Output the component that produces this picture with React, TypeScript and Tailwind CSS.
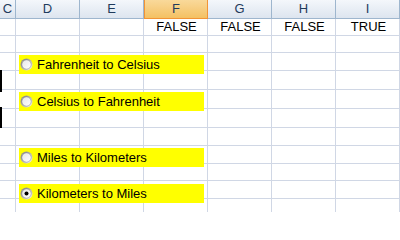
import React from "react";

const cols = [
  { name: "C", w: "w-4" },
  { name: "D", w: "w-16" },
  { name: "E", w: "w-16" },
  { name: "F", w: "w-16" },
  { name: "G", w: "w-16" },
  { name: "H", w: "w-16" },
  { name: "I", w: "w-16" },
];

// row heights as in the sheet (rows are not all the same)
const rowHeights = [
  "h-[17px]", "h-[17px]", "h-[18px]", "h-[19px]", "h-[19px]", "h-[19px]",
  "h-[18px]", "h-[18px]", "h-[17px]", "h-[18px]", "h-[14px]",
];

const firstRow: Record<string, string> = { F: "FALSE", G: "FALSE", H: "FALSE", I: "TRUE" };

const options = [
  { label: "Fahrenheit to Celsius", top: "top-[55px]", checked: false },
  { label: "Celsius to Fahrenheit", top: "top-[92px]", checked: false },
  { label: "Miles to Kilometers", top: "top-[148px]", checked: false },
  { label: "Kilometers to Miles", top: "top-[184px]", checked: true },
];

function Radio({ checked }: { checked: boolean }) {
  return (
    <svg width="13" height="13" viewBox="0 0 13 13" className="shrink-0">
      <defs>
        <linearGradient id="rim" x1="0" y1="0" x2="1" y2="1">
          <stop offset="0" stopColor="#808080" />
          <stop offset="0.55" stopColor="#b8b8b8" />
          <stop offset="1" stopColor="#ffffff" />
        </linearGradient>
        <linearGradient id="fill" x1="0" y1="0" x2="1" y2="1">
          <stop offset="0" stopColor="#e6e6e6" />
          <stop offset="1" stopColor="#ffffff" />
        </linearGradient>
      </defs>
      <circle cx="6.5" cy="6.5" r="6" fill="url(#rim)" />
      <circle cx="6.5" cy="6.5" r="4.6" fill="url(#fill)" stroke="#5a5a5a" strokeWidth="0.6" strokeOpacity="0.5" />
      {checked && <circle cx="6.5" cy="6.5" r="2" fill="#000" />}
    </svg>
  );
}

export default function App() {
  return (
    <div className="relative w-[400px] h-[212px] overflow-hidden bg-white text-[13px] font-['Liberation_Sans',Arial,sans-serif]">
      {/* column headers */}
      <div className="flex h-[19px]">
        {cols.map((c) =>
          c.name === "F" ? (
            <div
              key={c.name}
              className={`${c.w} flex items-center justify-center border-x border-b border-[#f29436] bg-gradient-to-b from-[#f9d99a] to-[#f4c163] text-[#1f3b5c]`}
            >
              {c.name}
            </div>
          ) : (
            <div
              key={c.name}
              className={`${c.w} flex items-center justify-center border-r border-b border-[#9eb6ce] bg-gradient-to-b from-[#f4f7fb] to-[#dde5ef] text-[#1f3b5c]`}
            >
              {c.name}
            </div>
          )
        )}
      </div>

      {/* cells */}
      {rowHeights.map((h, r) => (
        <div key={r} className={`flex ${h}`}>
          {cols.map((c) => (
            <div
              key={c.name}
              className={`${c.w} flex items-end justify-center pb-px pl-0.5 border-r border-b border-[#d0d7e5] text-black leading-[15px]`}
            >
              {r === 0 ? firstRow[c.name] ?? "" : ""}
            </div>
          ))}
        </div>
      ))}

      {/* edges of controls cut off at the left */}
      <div className="absolute left-0 top-[70px] w-0.5 h-[22px] bg-black" />
      <div className="absolute left-0 top-[107px] w-0.5 h-[21px] bg-black" />

      {/* option buttons floating over the sheet */}
      {options.map((o) => (
        <div
          key={o.label}
          className={`absolute ${o.top} left-[19px] w-[185px] h-[19px] bg-[#ffff00] flex items-center gap-1 pl-px text-black`}
        >
          <Radio checked={o.checked} />
          <span className="leading-none">{o.label}</span>
        </div>
      ))}
    </div>
  );
}
